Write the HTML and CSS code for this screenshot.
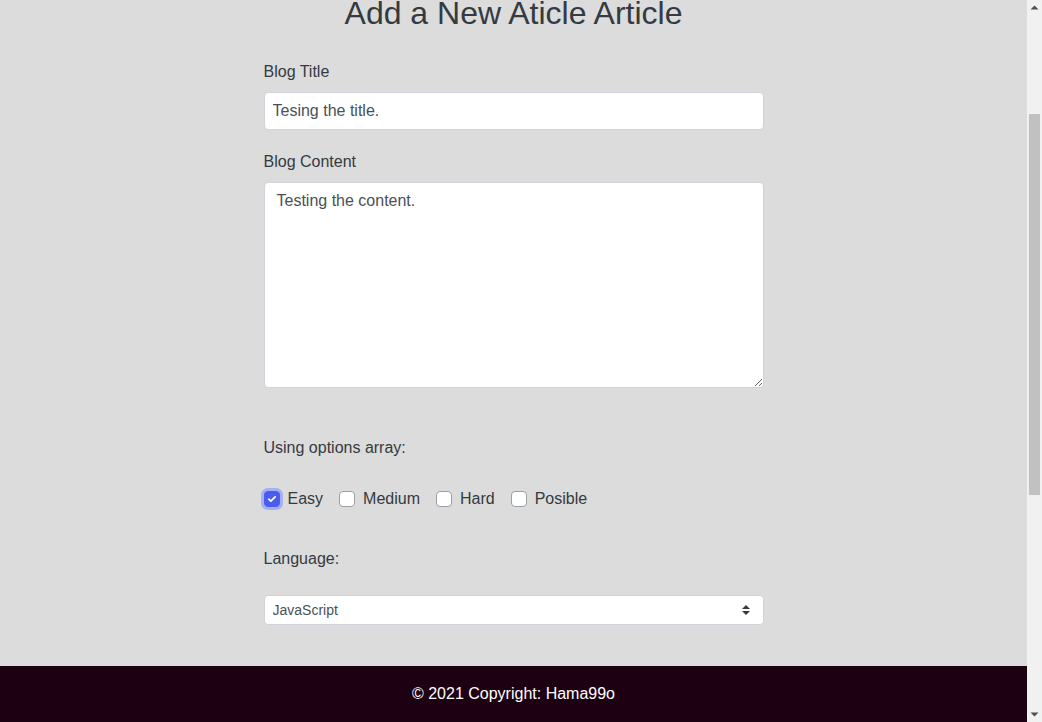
FILE: index.html
```html
<!DOCTYPE html>
<html lang="en">
<head>
<meta charset="utf-8">
<title>Add a New Article</title>
<link rel="stylesheet" href="styles.css">
</head>
<body>
<div class="window">
  <div class="viewport">
    <div class="scroll-area">
      <main class="page">
        <h2 class="page-title">Add a New Aticle Article</h2>
        <form class="article-form">
          <div class="field field-title">
            <label class="field-label" for="title">Blog Title</label>
            <input class="text-input" id="title" type="text" value="Tesing the title.">
          </div>
          <div class="field field-content">
            <label class="field-label" for="content">Blog Content</label>
            <textarea class="text-area" id="content">Testing the content.</textarea>
          </div>
          <div class="field field-options">
            <div class="field-label">Using options array:</div>
            <div class="check-row">
              <label class="check"><span class="check-box checked focused"><svg viewBox="0 0 16 16" width="14" height="14"><path d="M4.3 8.2l2.4 2.3 4.9-5" fill="none" stroke="#fff" stroke-width="2" stroke-linecap="round" stroke-linejoin="round"/></svg></span><span class="check-text">Easy</span></label>
              <label class="check"><span class="check-box"></span><span class="check-text">Medium</span></label>
              <label class="check"><span class="check-box"></span><span class="check-text">Hard</span></label>
              <label class="check"><span class="check-box"></span><span class="check-text">Posible</span></label>
            </div>
          </div>
          <div class="field field-language">
            <label class="field-label" for="lang">Language:</label>
            <div class="select-wrap">
              <select class="select-input" id="lang">
                <option>JavaScript</option>
                <option>Python</option>
                <option>Java</option>
              </select>
              <svg class="select-arrow" viewBox="0 0 10 12" width="10" height="12"><path d="M1 5L5 1L9 5Z M1 7L5 11L9 7Z" fill="#343a40"/></svg>
            </div>
          </div>
        </form>
      </main>
    </div>
    <footer class="site-footer">© 2021 Copyright: Hama99o</footer>
  </div>
  <div class="scrollbar">
    <div class="sb-arrow"><svg viewBox="0 0 15 15" width="15" height="15"><path d="M3.5 9.5L7.5 5.5L11.5 9.5Z" fill="#505050"/></svg></div>
    <div class="sb-track"><div class="sb-thumb"></div></div>
    <div class="sb-arrow"><svg viewBox="0 0 15 15" width="15" height="15"><path d="M3.5 5.5L7.5 9.5L11.5 5.5Z" fill="#505050"/></svg></div>
  </div>
</div>
</body>
</html>
```
FILE: styles.css
```css
html, body {
  margin: 0;
  padding: 0;
  height: 100%;
  overflow: hidden;
}
body {
  background: #dcdcdc;
  color: #333;
  font-family: "Liberation Sans", Arial, sans-serif;
  font-size: 16px;
  line-height: 24px;
}
.window {
  display: flex;
  height: 100vh;
}
.viewport {
  flex: 1;
  min-width: 0;
  display: flex;
  flex-direction: column;
}
.scroll-area {
  flex: 1;
  overflow: hidden;
}
.page {
  width: 500px;
  margin: 0 auto;
}
.page-title {
  margin: -6px 0 0;
  font-size: 32px;
  font-weight: 400;
  line-height: 38.4px;
  text-align: center;
  color: #343a40;
}
.article-form {
  display: flex;
  flex-direction: column;
}
.field {
  display: flex;
  flex-direction: column;
}
.field-title { margin-top: 28px; }
.field-content { margin-top: 20px; }
.field-options { margin-top: 48px; }
.field-language { margin-top: 36px; }
.field-label {
  display: block;
  margin-bottom: 8px;
  color: #343a40;
}
.text-input {
  box-sizing: border-box;
  height: 38px;
  padding: 0 8px;
  border: 1px solid #ced4da;
  border-radius: 4px;
  background: #fff;
  font: 16px "Liberation Sans", Arial, sans-serif;
  color: #495057;
  outline: none;
}
.text-area {
  box-sizing: border-box;
  height: 206px;
  padding: 6px 12px;
  border: 1px solid #ced4da;
  border-radius: 4px;
  background: #fff;
  font: 16px/24px "Liberation Sans", Arial, sans-serif;
  color: #495057;
  outline: none;
}
.check-row {
  display: flex;
  align-items: center;
  margin-top: 19px;
  height: 24px;
}
.check {
  display: flex;
  align-items: center;
  margin-right: 16px;
  color: #343a40;
}
.check-box {
  box-sizing: border-box;
  width: 16px;
  height: 16px;
  margin-right: 8px;
  border: 1px solid #9aa0a6;
  border-radius: 4px;
  background: #fff;
  display: flex;
  align-items: center;
  justify-content: center;
}
.check-box.checked {
  background: #4c5cf1;
  border-color: #4c5cf1;
}
.check-box.focused {
  box-shadow: 0 0 0 3px #a3b0f2;
}
.check-text {
  line-height: 24px;
}
.field-language .field-label {
  margin-bottom: 24px;
}
.select-wrap {
  position: relative;
  display: flex;
}
.select-input {
  flex: 1;
  box-sizing: border-box;
  height: 30px;
  padding: 0 8px;
  border: 1px solid #ced4da;
  border-radius: 4px;
  background: #fff;
  font: 14px "Liberation Sans", Arial, sans-serif;
  color: #495057;
  appearance: none;
  -webkit-appearance: none;
  outline: none;
}
.select-arrow {
  position: absolute;
  right: 13px;
  top: 9px;
  pointer-events: none;
}
.site-footer {
  flex: 0 0 56px;
  display: flex;
  align-items: center;
  justify-content: center;
  background: #1d0012;
  color: #fff;
  font-size: 16px;
}
.scrollbar {
  flex: 0 0 15px;
  display: flex;
  flex-direction: column;
  background: #f1f1f1;
}
.sb-arrow {
  flex: 0 0 15px;
  display: flex;
}
.sb-track {
  flex: 1;
  display: flex;
  flex-direction: column;
}
.sb-thumb {
  margin: 99px 2px 0;
  height: 381px;
  background: #c1c1c1;
}
```
